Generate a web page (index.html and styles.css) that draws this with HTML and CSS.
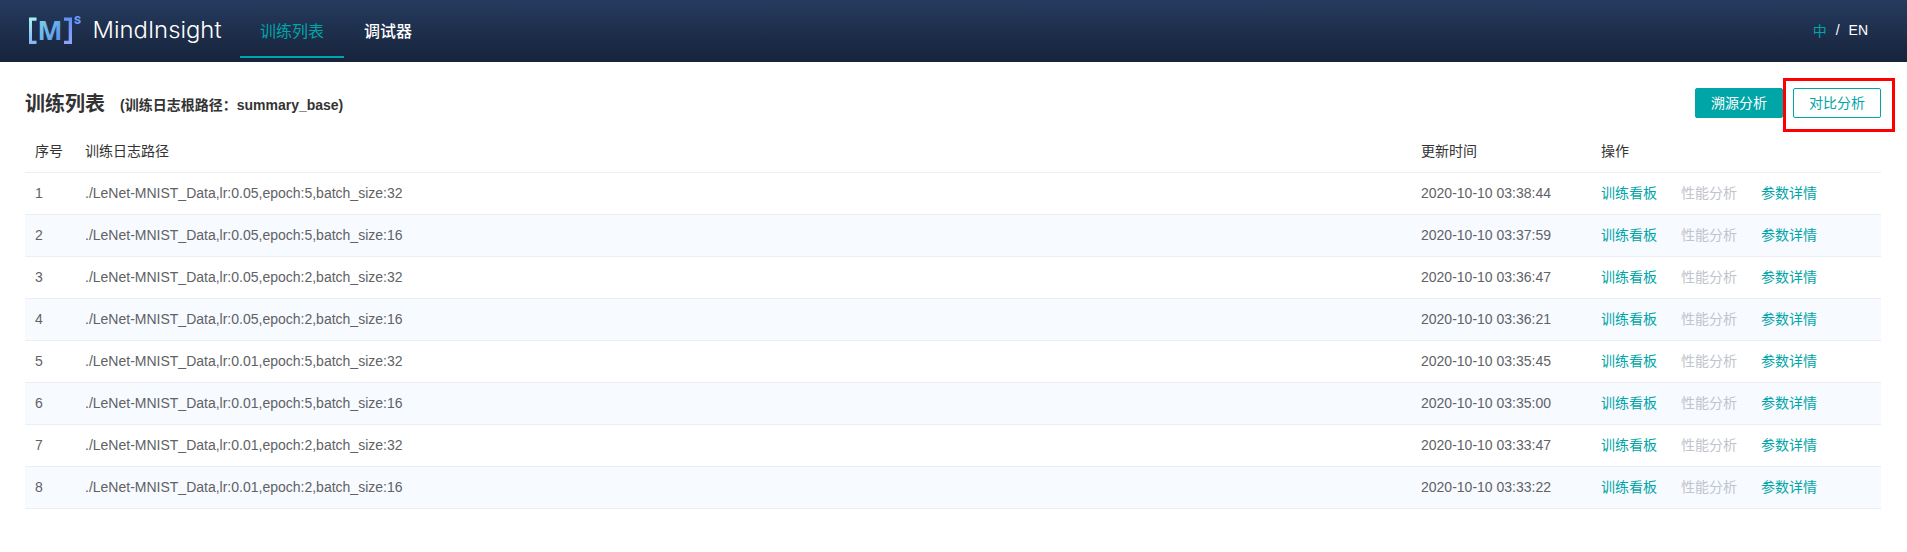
FILE: index.html
```html
<!DOCTYPE html>
<html lang="zh-CN">
<head>
<meta charset="utf-8">
<title>MindInsight</title>
<link rel="stylesheet" href="styles.css">
</head>
<body>
<header class="header">
  <svg class="logo" width="200" height="62" viewBox="0 0 200 62">
    <defs>
      <linearGradient id="left" x1="0" y1="0" x2="0" y2="1"><stop offset="0" stop-color="#a5f3f2"/><stop offset="1" stop-color="#86b4f5"/></linearGradient>
      <linearGradient id="mid" x1="0" y1="0" x2="1" y2="1"><stop offset="0" stop-color="#84e0ec"/><stop offset="1" stop-color="#5384e6"/></linearGradient>
      <linearGradient id="right" x1="0" y1="0" x2="0" y2="1"><stop offset="0" stop-color="#6190f8"/><stop offset="1" stop-color="#8fa4fb"/></linearGradient>
    </defs>
    <path d="M9 17.5h7.500v3.200h-4.500v20h4.500v3.200H9z" fill="url(#left)"/>
    <text class="logo-m" x="17.500" y="39.500" textLength="25" lengthAdjust="spacingAndGlyphs" fill="url(#mid)">M</text>
    <path d="M44 17.500h8v26.400h-8v-3.200h4.700v-20H44z" fill="url(#right)"/>
    <text class="logo-s" x="54" y="23.500" textLength="7" lengthAdjust="spacingAndGlyphs" fill="#6f9bff">S</text>
    <text class="logo-name" x="72.500" y="37.800" textLength="129" lengthAdjust="spacingAndGlyphs">MindInsight</text>
  </svg>
  <nav class="nav">
    <a class="tab tab-active">训练列表</a>
    <a class="tab">调试器</a>
  </nav>
  <div class="lang"><span class="lang-active">中</span><span>/</span><span>EN</span></div>
</header>
<main class="main">
  <div class="title-bar">
    <h1 class="title">训练列表</h1>
    <span class="path">(训练日志根路径：summary_base)</span>
    <div class="buttons">
      <button class="btn btn-primary">溯源分析</button>
      <div class="marked"><button class="btn">对比分析</button></div>
    </div>
  </div>
  <div class="table">
    <div class="row head"><span>序号</span><span>训练日志路径</span><span>更新时间</span><span>操作</span></div>
    <div class="row"><span>1</span><span>./LeNet-MNIST_Data,lr:0.05,epoch:5,batch_size:32</span><span>2020-10-10 03:38:44</span><span class="ops"><a>训练看板</a><a class="off">性能分析</a><a>参数详情</a></span></div>
    <div class="row"><span>2</span><span>./LeNet-MNIST_Data,lr:0.05,epoch:5,batch_size:16</span><span>2020-10-10 03:37:59</span><span class="ops"><a>训练看板</a><a class="off">性能分析</a><a>参数详情</a></span></div>
    <div class="row"><span>3</span><span>./LeNet-MNIST_Data,lr:0.05,epoch:2,batch_size:32</span><span>2020-10-10 03:36:47</span><span class="ops"><a>训练看板</a><a class="off">性能分析</a><a>参数详情</a></span></div>
    <div class="row"><span>4</span><span>./LeNet-MNIST_Data,lr:0.05,epoch:2,batch_size:16</span><span>2020-10-10 03:36:21</span><span class="ops"><a>训练看板</a><a class="off">性能分析</a><a>参数详情</a></span></div>
    <div class="row"><span>5</span><span>./LeNet-MNIST_Data,lr:0.01,epoch:5,batch_size:32</span><span>2020-10-10 03:35:45</span><span class="ops"><a>训练看板</a><a class="off">性能分析</a><a>参数详情</a></span></div>
    <div class="row"><span>6</span><span>./LeNet-MNIST_Data,lr:0.01,epoch:5,batch_size:16</span><span>2020-10-10 03:35:00</span><span class="ops"><a>训练看板</a><a class="off">性能分析</a><a>参数详情</a></span></div>
    <div class="row"><span>7</span><span>./LeNet-MNIST_Data,lr:0.01,epoch:2,batch_size:32</span><span>2020-10-10 03:33:47</span><span class="ops"><a>训练看板</a><a class="off">性能分析</a><a>参数详情</a></span></div>
    <div class="row"><span>8</span><span>./LeNet-MNIST_Data,lr:0.01,epoch:2,batch_size:16</span><span>2020-10-10 03:33:22</span><span class="ops"><a>训练看板</a><a class="off">性能分析</a><a>参数详情</a></span></div>
  </div>
</main>
</body>
</html>
```

FILE: styles.css
```css
* { box-sizing: border-box; }
body {
  margin: 0;
  background: #fff;
  color: #333;
  font-family: "Liberation Sans", "Noto Sans CJK SC", sans-serif;
  font-size: 14px;
}
.header {
  display: flex;
  height: 62px;
  padding: 0 39px 0 20px;
  background: linear-gradient(180deg, #263b5f, #16233a);
  color: #fff;
}
.logo { flex: none; overflow: visible; }
.logo-m { font: 700 27px "Noto Sans", sans-serif; }
.logo-s { font: 800 11px Inter, sans-serif; }
.logo-name { font: 300 23px Inter, sans-serif; fill: #fff; }
.nav { display: flex; margin-left: 20px; }
.tab {
  height: 58px;
  padding: 5px 20px 0;
  border-bottom: 2px solid transparent;
  font-size: 16px;
  line-height: 54px;
}
.tab:not(.tab-active) { font-weight: 500; }
.tab-active { color: #00a5a7; border-color: #00a5a7; }
.lang {
  display: flex;
  align-items: center;
  gap: 9px;
  height: 60px;
  margin-left: auto;
}
.lang-active { color: #00a5a7; }
.main { padding: 0 26px 0 25px; }
.title-bar {
  display: flex;
  height: 69px;
  padding-top: 16px;
}
.title { margin: 0; font-size: 20px; line-height: 52px; }
.path { margin-left: 15px; font-weight: 700; line-height: 54px; }
.buttons { display: flex; margin-left: auto; }
.btn {
  display: block;
  width: 88px;
  height: 30px;
  margin: 0;
  padding: 0;
  border: 1px solid #00a5a7;
  border-radius: 2px;
  background: #fff;
  color: #00a5a7;
  font: inherit;
  line-height: 28px;
}
.btn-primary { margin-top: 10px; background: #00a5a7; color: #fff; }
.marked {
  width: 112px;
  height: 54px;
  margin-right: -14px;
  padding: 7px;
  border: 3px solid #f00;
}
.row {
  display: grid;
  grid-template-columns: 50px 1336px 180px 1fr;
  align-items: center;
  height: 42px;
  padding: 0 0 2px 10px;
  border-bottom: 1px solid #ebeef5;
  background: #fff;
  color: #606266;
  line-height: 20px;
}
.row:nth-child(odd):not(.head) { background: #f7faff; }
.head { color: #333; }
.ops { display: flex; gap: 24px; }
.ops a { color: #00a5a7; }
.ops .off { color: #c0c4cc; }
```
